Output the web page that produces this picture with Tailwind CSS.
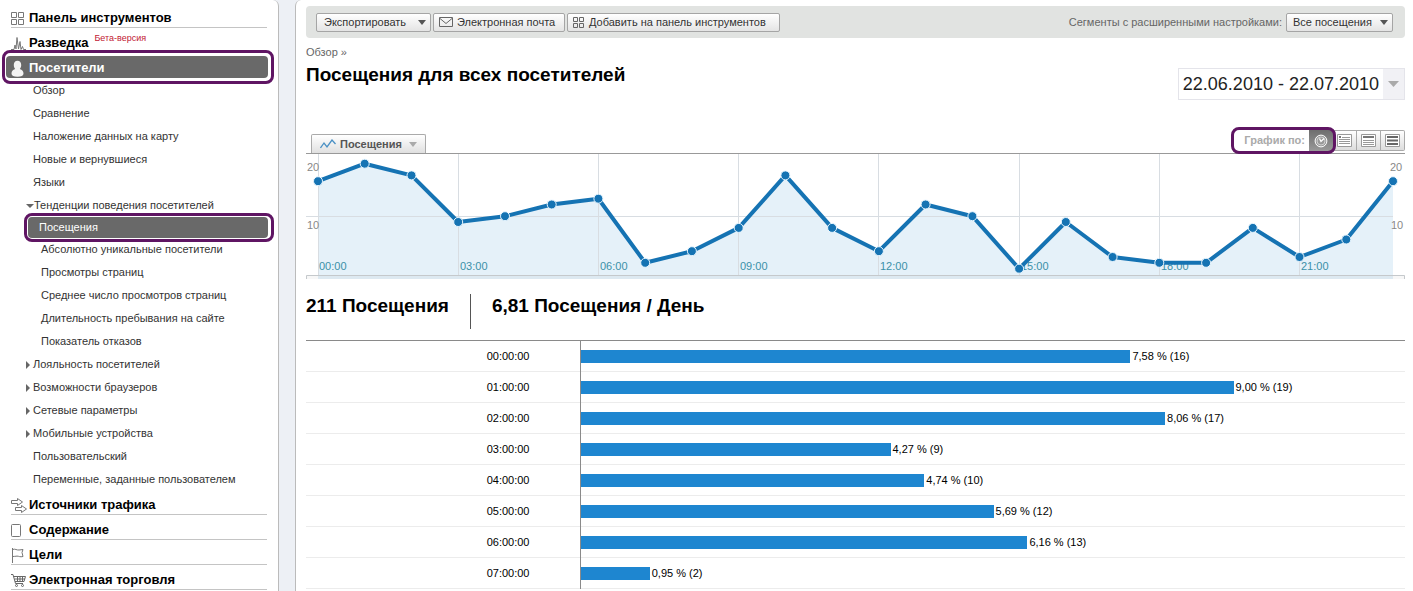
<!DOCTYPE html>
<html lang="ru">
<head>
<meta charset="utf-8">
<title>Посещения для всех посетителей</title>
<script src="https://cdn.jsdelivr.net/npm/@tailwindcss/browser@4"></script>
</head>
<body class="flex h-screen gap-4 overflow-hidden bg-[#edf0f5] font-['Liberation_Sans',Arial,sans-serif] text-[11px] text-[#333]">

<nav class="w-[279px] shrink-0 rounded-tr-md border-r border-[#bbb] bg-white pt-[3px]">
  <ul class="text-[13px] font-bold text-black">
    <li class="ml-[11px] mr-[11px] flex h-[25px] items-center border-b border-[#c4c4c4] pt-1.5">
      <a href="#" class="flex items-center gap-[5px]">
        <svg class="size-[13px]" viewBox="0 0 13 13" fill="none" stroke="#777"><path d="M.5.5h5v5h-5zM7.5.5h5v5h-5zM.5 7.5h5v5h-5zM7.5 7.5h5v5h-5z"/></svg>
        Панель инструментов</a>
    </li>
    <li class="ml-[11px] mr-[11px] flex h-[28px] items-center pt-0.5">
      <a href="#" class="flex items-center gap-[3px]">
        <svg class="h-[13px] w-[15px]" viewBox="0 0 15 13" fill="none" stroke="#777"><path d="M0 12.500h3L4 8l1 4L6 .5l1.500 11.500L9 4.500l1 8 1.500-3 1 3H15"/></svg>
        Разведка</a>
      <span class="ml-1.5 pb-2 text-[9px] font-normal text-[#c22033]">Бета-версия</span>
    </li>
    <li class="relative ml-1.5 mr-[10px] h-[22px]">
      <a href="#" class="flex h-full items-center gap-1 rounded-sm bg-[#696969] pl-1 pt-0.5 text-white">
        <svg class="h-[17px] w-[15px]" viewBox="0 0 15 17" fill="#f4f4f4"><path d="M7.500.8C10 .8 11.200 2.600 11.200 5c0 1.600-.6 3-1.400 3.900 2.500.8 3.700 2.300 3.700 4.600 0 2.200-2.300 3.200-6 3.200s-6-1-6-3.200c0-2.300 1.200-3.800 3.700-4.600C4.400 8 3.800 6.600 3.800 5 3.800 2.600 5 .8 7.500.8z"/></svg>
        Посетители</a>
      <span class="pointer-events-none absolute -inset-y-1.5 -left-1 -right-1.5 rounded-lg border-3 border-[#5f1563]"></span>
    </li>
  </ul>
  <ul class="-mb-px pt-px">
    <li class="flex h-[23px] items-center pl-[33px]"><a href="#">Обзор</a></li>
    <li class="flex h-[23px] items-center pl-[33px]"><a href="#">Сравнение</a></li>
    <li class="flex h-[23px] items-center pl-[33px]"><a href="#">Наложение данных на карту</a></li>
    <li class="flex h-[23px] items-center pl-[33px]"><a href="#">Новые и вернувшиеся</a></li>
    <li class="flex h-[23px] items-center pl-[33px]"><a href="#">Языки</a></li>
    <li class="flex h-[23px] items-center pl-[26px]"><svg class="h-1 w-2" viewBox="0 0 8 4" fill="#666"><path d="M0 0h8L4 4z"/></svg><a href="#">Тенденции поведения посетителей</a></li>
    <li class="relative ml-7 mr-[10px] h-[21px]">
      <a href="#" class="flex h-full items-center rounded-sm bg-[#696969] pl-[11px] text-white">Посещения</a>
      <span class="pointer-events-none absolute -inset-y-1 -left-1 -right-1.5 rounded-lg border-3 border-[#5f1563]"></span>
    </li>
    <li class="flex h-[23px] items-center pl-[41px]"><a href="#">Абсолютно уникальные посетители</a></li>
    <li class="flex h-[23px] items-center pl-[41px]"><a href="#">Просмотры страниц</a></li>
    <li class="flex h-[23px] items-center pl-[41px]"><a href="#">Среднее число просмотров страниц</a></li>
    <li class="flex h-[23px] items-center pl-[41px]"><a href="#">Длительность пребывания на сайте</a></li>
    <li class="flex h-[23px] items-center pl-[41px]"><a href="#">Показатель отказов</a></li>
    <li class="flex h-[23px] items-center gap-[3px] pl-[26px]"><svg class="h-2 w-1" viewBox="0 0 4 8" fill="#666"><path d="M0 0v8l4-4z"/></svg><a href="#">Лояльность посетителей</a></li>
    <li class="flex h-[23px] items-center gap-[3px] pl-[26px]"><svg class="h-2 w-1" viewBox="0 0 4 8" fill="#666"><path d="M0 0v8l4-4z"/></svg><a href="#">Возможности браузеров</a></li>
    <li class="flex h-[23px] items-center gap-[3px] pl-[26px]"><svg class="h-2 w-1" viewBox="0 0 4 8" fill="#666"><path d="M0 0v8l4-4z"/></svg><a href="#">Сетевые параметры</a></li>
    <li class="flex h-[23px] items-center gap-[3px] pl-[26px]"><svg class="h-2 w-1" viewBox="0 0 4 8" fill="#666"><path d="M0 0v8l4-4z"/></svg><a href="#">Мобильные устройства</a></li>
    <li class="flex h-[23px] items-center pl-[33px]"><a href="#">Пользовательский</a></li>
    <li class="flex h-[23px] items-center pl-[33px]"><a href="#">Переменные, заданные пользователем</a></li>
  </ul>
  <ul class="mx-[11px] text-[13px] font-bold text-black">
    <li class="flex h-[25px] items-center border-b border-[#c4c4c4] pt-1.5">
      <a href="#" class="flex items-center gap-0.5">
        <svg class="h-[17px] w-4" viewBox="0 0 16 17" fill="#fff" stroke="#777"><path d="M.5 3.500h6v-2l5 3.500-5 3.500v-2h-6z"/><path d="M4.500 10.500h6v-2l5 3.500-5 3.500v-2h-6z"/></svg>
        Источники трафика</a>
    </li>
    <li class="flex h-[25px] items-center border-b border-[#c4c4c4] pt-1.5">
      <a href="#" class="flex items-center gap-2">
        <svg class="h-[13px] w-[10px]" viewBox="0 0 10 13" fill="none" stroke="#777"><rect x=".5" y=".5" width="9" height="12" rx="1"/></svg>
        Содержание</a>
    </li>
    <li class="flex h-[25px] items-center border-b border-[#c4c4c4] pt-1.5">
      <a href="#" class="flex items-center gap-[5px]">
        <svg class="h-[15px] w-[13px]" viewBox="0 0 13 15" fill="none" stroke="#777"><path d="M1.500 0v15M1.500 1.500c3-1 4 .8 6.500.5l4-.5-1 3 1 4c-3 .8-4-.4-6-.4-1.800 0-3 .6-4.500.4"/></svg>
        Цели</a>
    </li>
    <li class="flex h-[25px] items-center border-b border-[#c4c4c4] pt-1.5">
      <a href="#" class="flex items-center gap-[3px]">
        <svg class="h-[14px] w-[15px]" viewBox="0 0 15 14" fill="none" stroke="#666"><path d="M0 1.500h2L4.500 10.500H12M2.500 3.500h12l-1.500 5H4M3.500 6h10.500M6.500 3.500v5M9 3.500v5M11.500 3.500v5"/><circle cx="5.500" cy="12.500" r="1"/><circle cx="11.500" cy="12.500" r="1"/></svg>
        Электронная торговля</a>
    </li>
  </ul>
</nav>

<main class="min-w-0 flex-1 rounded-tl-md border-l border-[#bbb] bg-white pl-[10px] pr-2 pt-1.5">
  <div class="flex h-8 items-center justify-between rounded-sm bg-[#e1e3e1] pl-[10px] pr-3">
    <div class="flex gap-0.5">
      <button class="flex h-[19px] min-w-[115px] items-center justify-between rounded-xs border border-[#a5a5a5] bg-linear-to-b from-white to-[#e4e4e4] pl-[7px] pr-1">Экспортировать <svg class="h-[5px] w-2" viewBox="0 0 8 5" fill="#555"><path d="M0 0h8L4 5z"/></svg></button>
      <button class="flex h-[19px] min-w-[132px] items-center gap-1 rounded-xs border border-[#a5a5a5] bg-linear-to-b from-white to-[#e4e4e4] pl-[5px] pr-[7px]"><svg class="h-[10px] w-[14px]" viewBox="0 0 14 10" fill="none" stroke="#666"><path d="M.5.5h13v9H.500zM1 1.500l6 5 6-5"/></svg>Электронная почта</button>
      <button class="flex h-[19px] min-w-[213px] items-center gap-[5px] rounded-xs border border-[#a5a5a5] bg-linear-to-b from-white to-[#e4e4e4] pl-[5px] pr-2"><svg class="size-[11px]" viewBox="0 0 11 11" fill="none" stroke="#666"><path d="M.5.5h4v4h-4zM6.500.5h4v4h-4zM.5 6.500h4v4h-4zM6.500 6.500h4v4h-4z"/></svg>Добавить на панель инструментов</button>
    </div>
    <div class="flex items-center gap-1">
      <label for="segment" class="text-[#666]">Сегменты с расширенными настройками:</label>
      <div class="relative">
        <select id="segment" class="block h-[19px] w-[107px] appearance-none rounded-xs border border-[#a5a5a5] bg-linear-to-b from-white to-[#e4e4e4] pl-1.5 pr-4"><option>Все посещения</option></select>
        <svg class="pointer-events-none absolute right-[5px] top-[7px] h-[5px] w-2" viewBox="0 0 8 5" fill="#555"><path d="M0 0h8L4 5z"/></svg>
      </div>
    </div>
  </div>

  <header class="flex h-[92px] justify-between">
    <div class="pt-[7px]">
      <a href="#" class="block leading-[14px] text-[#666]">Обзор »</a>
      <h1 class="mt-1 text-[19px] font-bold leading-6 text-black">Посещения для всех посетителей</h1>
    </div>
    <button class="mt-[30px] flex h-8 border border-[#e4e4ea] text-[18px] text-[#222]">
      <span class="flex h-full items-center px-1">22.06.2010 - 22.07.2010</span>
      <span class="flex h-full w-[21px] items-center justify-center bg-[#f1f1f5]"><svg class="h-1.5 w-[11px]" viewBox="0 0 11 6" fill="#aaa"><path d="M0 0h11L5.500 6z"/></svg></span>
    </button>
  </header>

  <div class="flex h-[23px] justify-between pl-[5px]">
    <button class="flex h-[19px] min-w-[115px] items-center gap-1 self-end rounded-t-xs border border-b-0 border-[#aaa] bg-linear-to-b from-white to-[#e0e0e0] pl-2 pr-2 font-bold text-[#555]">
      <svg class="h-[10px] w-4" viewBox="0 0 16 10" fill="none" stroke="#4a90c4" stroke-width="1.300"><path d="M.5 9 4 4l3 4 5-7 3.500 4"/></svg>
      Посещения
      <svg class="ml-auto h-[5px] w-2" viewBox="0 0 8 5" fill="#aaa"><path d="M0 0h8L4 5z"/></svg>
    </button>
    <div class="relative flex h-[21px] items-center">
      <span class="mr-1 font-bold text-[#aaa]">График по:</span>
      <button aria-label="По часам" class="flex h-full w-6 items-center justify-center bg-linear-to-b from-[#6e6e6e] to-[#999]"><svg class="size-[14px]" viewBox="0 0 14 14"><circle cx="7" cy="7" r="5.900" fill="#999" stroke="#fff"/><circle cx="7" cy="7" r="4" fill="none" stroke="#ddd" stroke-width=".8"/><path d="M5.500 4.500 7 7.500l3-3" fill="none" stroke="#fff" stroke-width="1.300"/></svg></button>
      <button aria-label="По дням" class="flex h-full w-6 items-center justify-center border-y border-r border-[#aaa] bg-linear-to-b from-white to-[#ddd]"><svg class="h-[13px] w-[15px]" viewBox="0 0 15 13" fill="#fff" stroke="#999"><path d="M.5.5h14v12H.500z"/><path d="M5 3.500h8M2 5.500h11M2 7.500h11M2 9.500h11"/><path d="M2 3h2" stroke="#777" stroke-width="2"/></svg></button>
      <button aria-label="По неделям" class="flex h-full w-6 items-center justify-center border-y border-r border-[#aaa] bg-linear-to-b from-white to-[#ddd]"><svg class="h-[13px] w-[15px]" viewBox="0 0 15 13" fill="#fff" stroke="#999"><path d="M.5.5h14v12H.500z"/><path d="M2 3h11" stroke="#777" stroke-width="2"/><path d="M2 6.500h11M2 8.500h11M2 10.500h11"/></svg></button>
      <button aria-label="По месяцам" class="flex h-full w-6 items-center justify-center rounded-r-xs border-y border-r border-[#aaa] bg-linear-to-b from-white to-[#ddd]"><svg class="h-[13px] w-[15px]" viewBox="0 0 15 13" fill="#fff" stroke="#999"><path d="M.5.5h14v12H.500z"/><path d="M2 3h11M2 6.500h11M2 10h11" stroke="#666" stroke-width="2"/></svg></button>
      <span class="pointer-events-none absolute -bottom-[3px] -left-[13px] -top-[3px] right-[69px] rounded-lg border-3 border-[#5f1563]"></span>
    </div>
  </div>

  <svg class="block h-auto w-full text-[11px]" viewBox="0 0 1099 126" role="img" aria-label="Посещения по часам">
    <defs><marker id="dot" markerUnits="userSpaceOnUse" markerWidth="12" markerHeight="12" refX="6" refY="6"><circle cx="6" cy="6" r="4.500" fill="#1573b3" stroke="#e8f6ff"/></marker></defs>
    <path fill="#e5f1f9" d="M12 126V28.200L58.700 10.700 105.500 22.400 152.200 69 199 63.200 245.700 51.500 292.400 45.700 339.200 109.800 385.900 98.200 432.700 74.900 479.400 22.400 526.100 74.900 572.900 98.200 619.600 51.500 666.400 63.200 713.100 115.700 759.800 69 806.600 104 853.300 109.800 900.100 109.800 946.800 74.900 993.500 104 1040.300 86.500 1087 28.200V126z"/>
    <path fill="#000" fill-opacity=".03" d="M0 122h1099v4H0z"/>
    <path stroke="#d8dde2" d="M0 63.500h1087M12.500 1v121M152.500 1v121M292.500 1v121M432.500 1v121M572.500 1v121M713.500 1v121M853.500 1v121M993.500 1v121"/>
    <path stroke="#999" d="M0 .5h1099"/>
    <path fill="none" stroke="#c5c9cc" d="M.5 126v-3.500h1098V126"/>
    <g fill="#888"><text x="1" y="18">20</text><text x="1" y="76">10</text><text x="1084" y="18">20</text><text x="1085" y="76">10</text></g>
    <g fill="#3a90a8"><text x="13" y="117">00:00</text><text x="154" y="117">03:00</text><text x="294" y="117">06:00</text><text x="434" y="117">09:00</text><text x="574" y="117">12:00</text><text x="715" y="117">15:00</text><text x="855" y="117">18:00</text><text x="995" y="117">21:00</text></g>
    <polyline fill="none" stroke="#1573b3" stroke-width="4" stroke-linejoin="round" marker-start="url(#dot)" marker-mid="url(#dot)" marker-end="url(#dot)" points="12,28.2 58.7,10.7 105.5,22.4 152.2,69 199,63.2 245.7,51.5 292.4,45.7 339.2,109.8 385.9,98.2 432.7,74.9 479.4,22.4 526.1,74.9 572.9,98.2 619.6,51.5 666.4,63.2 713.1,115.7 759.8,69 806.6,104 853.3,109.8 900.1,109.8 946.8,74.9 993.5,104 1040.3,86.5 1087,28.2"/>
  </svg>

  <div class="flex h-[61px] items-start pt-[15px] text-[19px] font-bold leading-6 text-black">
    <p>211 Посещения</p>
    <p class="ml-[21px] h-[35px] border-l border-[#555] pl-[21px]">6,81 Посещения / День</p>
  </div>

  <table class="w-full table-fixed border-collapse border-t border-[#8a8a8a] text-black">
    <colgroup><col class="w-[274px]"><col></colgroup>
    <tbody>
      <tr class="h-[31px] border-b border-[#ececec]"><th scope="row" class="border-r border-[#8a8a8a] p-0 pr-[50px] text-right font-normal">00:00:00</th><td class="p-0"><div class="flex items-center gap-0.5"><span class="h-[13px] bg-[#1e86d0]" style="width:66.7%"></span>7,58 % (16)</div></td></tr>
      <tr class="h-[31px] border-b border-[#ececec]"><th scope="row" class="border-r border-[#8a8a8a] p-0 pr-[50px] text-right font-normal">01:00:00</th><td class="p-0"><div class="flex items-center gap-0.5"><span class="h-[13px] bg-[#1e86d0]" style="width:79.2%"></span>9,00 % (19)</div></td></tr>
      <tr class="h-[31px] border-b border-[#ececec]"><th scope="row" class="border-r border-[#8a8a8a] p-0 pr-[50px] text-right font-normal">02:00:00</th><td class="p-0"><div class="flex items-center gap-0.5"><span class="h-[13px] bg-[#1e86d0]" style="width:70.9%"></span>8,06 % (17)</div></td></tr>
      <tr class="h-[31px] border-b border-[#ececec]"><th scope="row" class="border-r border-[#8a8a8a] p-0 pr-[50px] text-right font-normal">03:00:00</th><td class="p-0"><div class="flex items-center gap-0.5"><span class="h-[13px] bg-[#1e86d0]" style="width:37.6%"></span>4,27 % (9)</div></td></tr>
      <tr class="h-[31px] border-b border-[#ececec]"><th scope="row" class="border-r border-[#8a8a8a] p-0 pr-[50px] text-right font-normal">04:00:00</th><td class="p-0"><div class="flex items-center gap-0.5"><span class="h-[13px] bg-[#1e86d0]" style="width:41.7%"></span>4,74 % (10)</div></td></tr>
      <tr class="h-[31px] border-b border-[#ececec]"><th scope="row" class="border-r border-[#8a8a8a] p-0 pr-[50px] text-right font-normal">05:00:00</th><td class="p-0"><div class="flex items-center gap-0.5"><span class="h-[13px] bg-[#1e86d0]" style="width:50.1%"></span>5,69 % (12)</div></td></tr>
      <tr class="h-[31px] border-b border-[#ececec]"><th scope="row" class="border-r border-[#8a8a8a] p-0 pr-[50px] text-right font-normal">06:00:00</th><td class="p-0"><div class="flex items-center gap-0.5"><span class="h-[13px] bg-[#1e86d0]" style="width:54.2%"></span>6,16 % (13)</div></td></tr>
      <tr class="h-[31px] border-b border-[#ececec]"><th scope="row" class="border-r border-[#8a8a8a] p-0 pr-[50px] text-right font-normal">07:00:00</th><td class="p-0"><div class="flex items-center gap-0.5"><span class="h-[13px] bg-[#1e86d0]" style="width:8.4%"></span>0,95 % (2)</div></td></tr>
    </tbody>
  </table>
</main>
</body>
</html>
